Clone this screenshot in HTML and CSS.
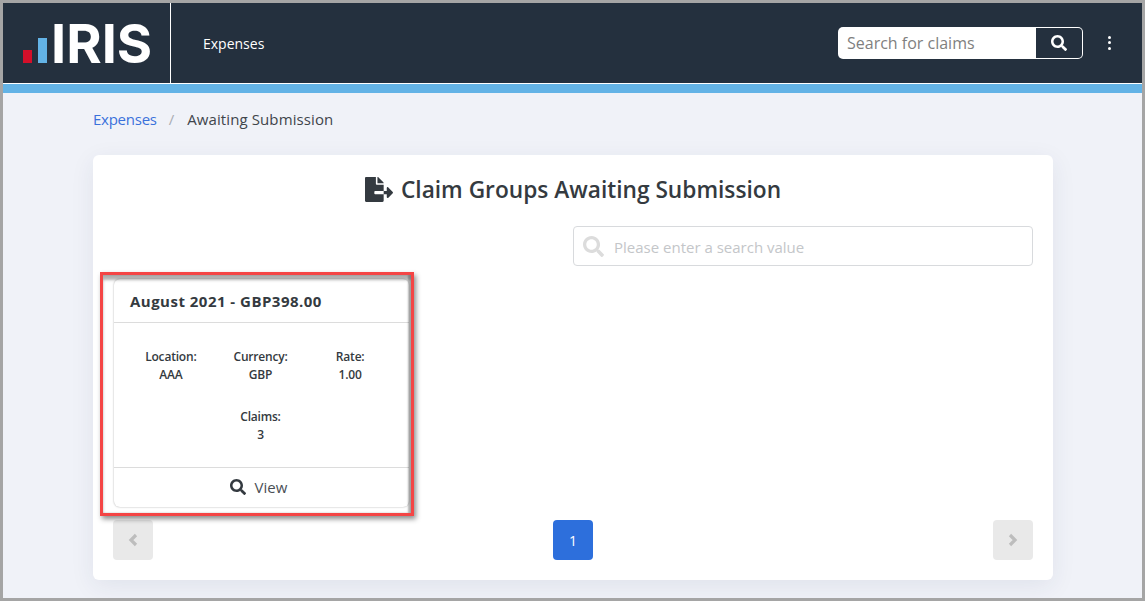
FILE: index.html
```html
<!DOCTYPE html>
<html lang="en">
<head>
<meta charset="utf-8">
<title>Claim Groups Awaiting Submission</title>
<link rel="stylesheet" href="styles.css">
</head>
<body>
<div class="frame">
  <header class="topbar">
    <div class="brand">
      <span class="bars"><i class="bar bar-red"></i><i class="bar bar-blue"></i></span>
      <span class="wordmark">IRIS</span>
    </div>
    <div class="app-name">Expenses</div>
    <form class="top-search">
      <input class="top-input" type="text" placeholder="Search for claims">
      <button class="top-btn" type="button" aria-label="Search">
        <svg class="ic-top" viewBox="0 0 512 512"><path d="M505 442.7L405.3 343c-4.5-4.5-10.6-7-17-7H372c27.6-35.3 44-79.7 44-128C416 93.1 322.9 0 208 0S0 93.1 0 208s93.1 208 208 208c48.3 0 92.7-16.4 128-44v16.3c0 6.4 2.5 12.5 7 17l99.7 99.7c9.4 9.4 24.6 9.4 33.9 0l28.3-28.3c9.4-9.4 9.4-24.6.1-34zM208 336c-70.7 0-128-57.2-128-128 0-70.7 57.2-128 128-128 70.7 0 128 57.2 128 128 0 70.7-57.2 128-128 128z"/></svg>
      </button>
    </form>
    <div class="kebab"><i></i><i></i><i></i></div>
  </header>
  <div class="band"></div>
  <main class="main">
    <nav class="crumbs"><a class="crumb-link">Expenses</a><span class="crumb-sep">/</span><span class="crumb-cur">Awaiting Submission</span></nav>
    <section class="panel">
      <h1 class="title">
        <svg class="ic-title" viewBox="0 0 576 512"><path d="M384 121.9c0-6.3-2.5-12.4-7-16.9L279.1 7c-4.5-4.5-10.6-7-17-7H256v128h128zM571 308l-95.7-96.4c-10.1-10.1-27.4-3-27.4 11.3V288h-64v64h64v65.2c0 14.3 17.3 21.4 27.4 11.3L571 332c6.6-6.6 6.6-17.4 0-24zm-379 28v-32c0-8.8 7.2-16 16-16h176V160H248c-13.2 0-24-10.8-24-24V0H24C10.7 0 0 10.7 0 24v464c0 13.3 10.7 24 24 24h336c13.3 0 24-10.7 24-24V352H208c-8.8 0-16-7.2-16-16z"/></svg>
        <span>Claim Groups Awaiting Submission</span>
      </h1>
      <div class="filter-row">
        <div class="filter">
          <svg class="ic-filter" viewBox="0 0 512 512"><path d="M505 442.7L405.3 343c-4.5-4.5-10.6-7-17-7H372c27.6-35.3 44-79.7 44-128C416 93.1 322.9 0 208 0S0 93.1 0 208s93.1 208 208 208c48.3 0 92.7-16.4 128-44v16.3c0 6.4 2.5 12.5 7 17l99.7 99.7c9.4 9.4 24.6 9.4 33.9 0l28.3-28.3c9.4-9.4 9.4-24.6.1-34zM208 336c-70.7 0-128-57.2-128-128 0-70.7 57.2-128 128-128 70.7 0 128 57.2 128 128 0 70.7-57.2 128-128 128z"/></svg>
          <input class="filter-input" type="text" placeholder="Please enter a search value">
        </div>
      </div>
      <div class="tiles">
        <article class="tile">
          <div class="highlight"></div>
          <div class="tile-head">August 2021 - GBP398.00</div>
          <div class="tile-body">
            <div class="fact"><div>Location:</div><div>AAA</div></div>
            <div class="fact"><div>Currency:</div><div>GBP</div></div>
            <div class="fact"><div>Rate:</div><div>1.00</div></div>
            <div class="fact fact-mid"><div>Claims:</div><div>3</div></div>
          </div>
          <div class="tile-foot">
            <svg class="ic-view" viewBox="0 0 512 512"><path d="M505 442.7L405.3 343c-4.5-4.5-10.6-7-17-7H372c27.6-35.3 44-79.7 44-128C416 93.1 322.9 0 208 0S0 93.1 0 208s93.1 208 208 208c48.3 0 92.7-16.4 128-44v16.3c0 6.4 2.5 12.5 7 17l99.7 99.7c9.4 9.4 24.6 9.4 33.9 0l28.3-28.3c9.4-9.4 9.4-24.6.1-34zM208 336c-70.7 0-128-57.2-128-128 0-70.7 57.2-128 128-128 70.7 0 128 57.2 128 128 0 70.7-57.2 128-128 128z"/></svg>
            <span>View</span>
          </div>
        </article>
      </div>
      <div class="pager">
        <button class="page-arrow arrow-prev" type="button" aria-label="Previous"><svg class="ic-chev" viewBox="0 0 10 14"><polyline points="8,2 3,7 8,12"/></svg></button>
        <button class="page-num" type="button">1</button>
        <button class="page-arrow" type="button" aria-label="Next"><svg class="ic-chev" viewBox="0 0 10 14"><polyline points="2,2 7,7 2,12"/></svg></button>
      </div>
    </section>
  </main>
</div>
</body>
</html>
```

FILE: styles.css
```css
* { box-sizing: border-box; }
html, body { margin: 0; padding: 0; height: 100%; overflow: hidden; }
body { font-family: "Open Sans", "Noto Sans", sans-serif; color: #343a40; }

.frame { width: 1145px; height: 601px; border: 3px solid #a5a5a5; background: #f0f2f8; overflow: hidden; }

.topbar { display: flex; align-items: center; height: 81px; background: #24303e; border-bottom: 1px solid #fff; color: #fff; }
.brand { display: flex; align-items: flex-end; width: 168px; height: 80px; border-right: 1px solid #fff; padding: 0 0 20px 20px; flex: none; }
.bars { display: flex; align-items: flex-end; gap: 6px; margin-right: 4px; }
.bar { display: block; width: 9px; }
.bar-red { height: 13px; background: #d40f2a; }
.bar-blue { height: 25px; background: #63b3e6; }
.wordmark { font-family: Inter, "Liberation Sans", sans-serif; font-weight: 700; font-size: 54px; line-height: 39px; height: 39px; letter-spacing: 0; color: #fff; }
.app-name { margin-left: 32px; font-size: 14px; font-weight: 400; letter-spacing: 0; }

.top-search { display: flex; margin-left: auto; width: 245px; height: 32px; margin-top: -1px; }
.top-input { width: 198px; height: 32px; border: 0; border-radius: 5px 0 0 5px; padding: 0 9px; font: 400 16px "Open Sans", sans-serif; background: #fff; outline: 0; }
.top-input::placeholder { color: #7f7f7f; opacity: 1; }
.top-btn { width: 47px; height: 32px; display: flex; align-items: center; justify-content: center; background: transparent; border: 1px solid #fff; border-left: 0; border-radius: 0 5px 5px 0; padding: 0; }
.ic-top { width: 16px; height: 16px; fill: #fff; }
.kebab { width: 4px; margin: -1px 31px 0 24px; display: flex; flex-direction: column; align-items: center; gap: 2.5px; }
.kebab i { display: block; width: 3px; height: 3px; border-radius: 50%; background: #fff; }

.band { height: 9px; background: #63b3e6; }

.main { padding: 0 89px 0 90px; }
.crumbs { display: flex; align-items: center; height: 24px; margin: 14px 0 24px; font-size: 15px; line-height: 24px; }
.crumb-link { color: #3a71db; letter-spacing: -0.25px; }
.crumb-sep { color: #a9adb3; margin: 0 13px 0 12px; }
.crumb-cur { color: #40454b; letter-spacing: 0.1px; }

.panel { height: 425px; background: #fff; border-radius: 6px; padding: 17px 20px 0; box-shadow: 0 6px 24px rgba(40, 50, 90, 0.08); }
.title { display: flex; align-items: center; justify-content: center; gap: 8px; margin: 0 0 18px; height: 36px; font-size: 22.7px; font-weight: 600; line-height: 36px; color: #343a40; }
.ic-title { width: 28px; height: 25px; margin-top: -1px; fill: #343a40; }

.filter-row { display: flex; justify-content: flex-end; height: 40px; margin-bottom: 13px; }
.filter { display: flex; align-items: center; width: 460px; height: 40px; border: 1px solid #d8dadd; border-radius: 4px; padding-left: 9px; }
.ic-filter { width: 21px; height: 21px; fill: #dcdcdc; flex: none; }
.filter-input { flex: 1; min-width: 0; height: 24px; border: 0; outline: 0; margin: 1px 0 0 10px; padding: 0; font: 400 15px "Open Sans", sans-serif; background: transparent; }
.filter-input::placeholder { color: #c4c6c9; opacity: 1; }

.tiles { height: 228px; margin-bottom: 13px; }
.tile { position: relative; width: 295px; height: 228px; margin-left: 1px; background: #fff; border-radius: 6px; box-shadow: 0 0 2px rgba(0, 0, 0, 0.35); display: flex; flex-direction: column; }
.highlight { position: absolute; left: -14px; top: -7px; width: 314px; height: 244px; border: 3px solid #f44545; box-shadow: 2px 3px 5px rgba(0, 0, 0, 0.45), inset 0 5px 3px rgba(0, 0, 0, 0.3), inset -3px 0 2px rgba(0, 0, 0, 0.28); pointer-events: none; }
.tile-head { height: 44px; padding: 0 16px; border-bottom: 1px solid #dcdcdc; font-size: 15px; font-weight: 700; line-height: 44px; letter-spacing: 0.48px; color: #343a40; flex: none; }
.tile-body { display: grid; grid-template-columns: repeat(3, 1fr); row-gap: 24px; align-content: start; height: 144px; padding: 25px 14px 0 12px; flex: none; }
.fact { font-size: 12px; font-weight: 600; line-height: 18px; text-align: center; letter-spacing: -0.2px; }
.fact-mid { grid-column: 2; }
.tile-foot { display: flex; align-items: center; justify-content: center; gap: 9px; flex: 1; border-top: 1px solid #dcdcdc; padding: 0 6px 2px 0; font-size: 15px; color: #4a4f55; }
.ic-view { width: 16px; height: 16px; fill: #343a40; }

.pager { display: flex; justify-content: space-between; align-items: center; }
.page-arrow { width: 40px; height: 40px; display: flex; align-items: center; justify-content: center; padding: 0; border: 0; border-radius: 4px; background: #e9e9e9; }
.arrow-prev { padding-right: 1px; }
.ic-chev { width: 10px; height: 14px; fill: none; stroke: #bdbdbd; stroke-width: 3.2; }
.page-num { width: 40px; height: 40px; padding: 0; border: 0; border-radius: 4px; background: #2d6fdc; color: #fff; font: 400 14px "Open Sans", sans-serif; }
```
